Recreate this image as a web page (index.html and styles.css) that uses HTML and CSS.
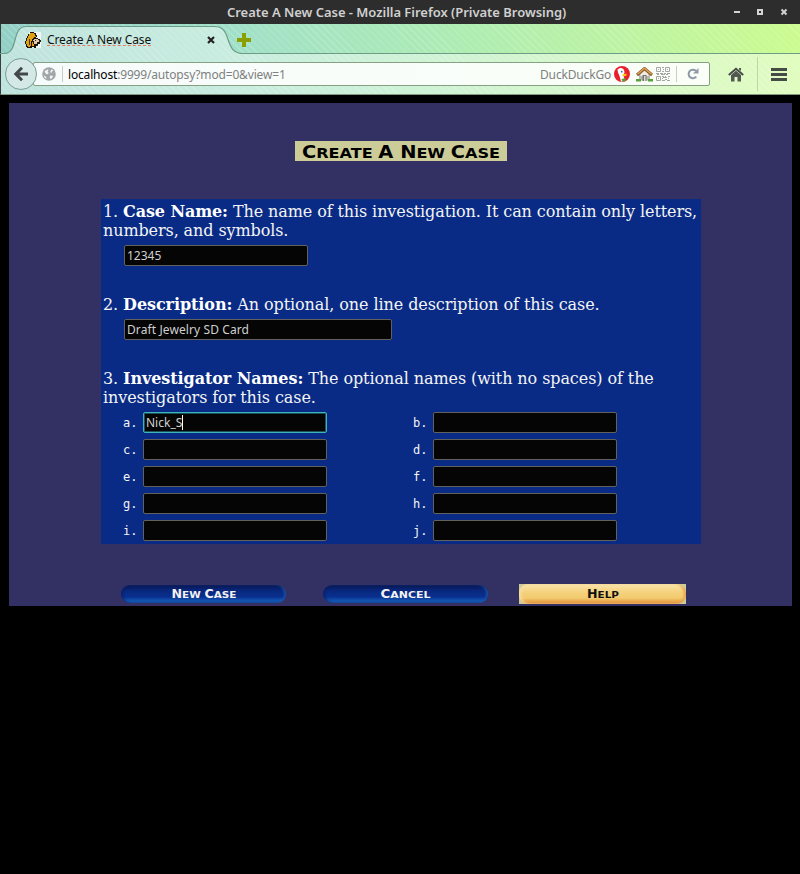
FILE: index.html
```
<!DOCTYPE html>
<html lang="en">
<head>
<meta charset="utf-8">
<title>Create A New Case</title>
<link rel="stylesheet" href="styles.css">
</head>
<body>
<header class="titlebar">
  <span class="window-title">Create A New Case - Mozilla Firefox (Private Browsing)</span>
  <svg class="window-controls" width="60" height="24" viewBox="0 0 60 24">
    <path d="M4 12h6" stroke="#d3d3d3" stroke-width="2"/>
    <rect x="28" y="10" width="4" height="4" fill="none" stroke="#d3d3d3" stroke-width="2"/>
    <path d="M51.5 9.500l5 5m0-5l-5 5" stroke="#d3d3d3" stroke-width="2"/>
  </svg>
</header>
<div class="chrome">
  <div class="tabs">
    <svg class="tab-shape" width="800" height="30" viewBox="0 0 800 30">
      <path d="M0 30V29.500H4C19 29.500 11 2.500 26 2.500H215C233 2.500 223 29.500 243 29.500H800V30Z" fill="#fff" fill-opacity=".42"/>
      <path d="M0 29.500H4C19 29.500 11 2.500 26 2.500H215C233 2.500 223 29.500 243 29.500H800" fill="none" stroke="#6d9c87" stroke-width="1.200"/>
    </svg>
    <svg class="favicon" width="16" height="16" viewBox="0 0 16 16">
      <path d="M4 0h12v16H2V8z" fill="#eef8f8"/>
      <path d="M5 0h4v1h2v2h1v2h-1v3l2 6h-2v2H9v-1H7v1H2v-1H1v-3H0V9h1V6h1V4h1V2h2z" fill="#1a1508"/>
      <path d="M5 1h4v1h1v2h1v1H9v2H7v2H6v5H5v1H3v-1H2v-2H1V9h1V6h1V4h1V2h1zM7 10h1v4H7z" fill="#e0a010"/>
      <path d="M4 7h1v6H4z" fill="#4b370c"/>
      <path d="M8 6h5v1h2v1h1v2h-1v2h-2v1H9v-1H8z" fill="#1a1508"/>
      <path d="M9 7h4v1h2v2h-1v1h-2v1H9V9H8V8h1z" fill="#e4cba9"/>
      <path d="M10 8h1v1h-1zM14 8h2v2h-2zM12 10h2v1h-2z" fill="#222"/>
      <path d="M7 12h2v2H7z" fill="#e0a010"/>
    </svg>
    <span class="tab-title">Create A New Case</span>
    <svg class="tab-close" width="8" height="8" viewBox="0 0 8 8"><path d="M1 1l6 6M7 1L1 7" stroke="#222" stroke-width="2.200"/></svg>
    <svg class="tab-add" width="14" height="14" viewBox="0 0 14 14"><path d="M5 0h4v5h5v4H9v5H5V9H0V5h5z" fill="#8aa000"/></svg>
  </div>
  <nav class="toolbar">
    <span class="back">
      <svg width="16" height="16" viewBox="0 0 16 16"><path d="M15 8H3M9 1.800L2.800 8 9 14.200" fill="none" stroke="#42484a" stroke-width="3"/></svg>
    </span>
    <div class="urlbar">
      <svg class="globe" width="14" height="14" viewBox="0 0 14 14">
        <circle cx="7" cy="7" r="6.800" fill="#a2a6a8"/>
        <path d="M2.500 4.500l2.500-2 1.500.5-1 2 1.500 1-1.500 1.200-1.500-.2zM9.500 2.200l1.800 1.300-1.300.9-.8 1.600-1-1zM8 8.500l2.500.2.500 1L9 12 7.800 11zM1.500 8.500l2.300 1 .9 2.300-1.800-.8z" fill="#f3f5f5"/>
      </svg>
      <i class="rule"></i>
      <span class="url"><b>localhost</b>:9999/autopsy?mod=0&amp;view=1</span>
      <span class="engine">DuckDuckGo</span>
      <svg class="duck" width="16" height="16" viewBox="0 0 16 16">
        <circle cx="8" cy="8" r="8" fill="#ea1f2c"/>
        <path d="M3.500 3.500l2-1.300c3-.6 5 1.300 5 4.300L9.500 9l1 4.500-1.500 2H7L5.500 10 4 6.500z" fill="#fff"/>
        <path d="M8.500 8.500l4-1-.5 1.200h1.500l-2 1.300-3 .3z" fill="#fdca0a"/>
        <path d="M7.500 13l4-1v3l-3 .8z" fill="#50a535"/><circle cx="7.700" cy="5.700" r=".9" fill="#2878b0"/>
      </svg>
      <svg class="cottage" width="17" height="15" viewBox="0 0 17 15">
        <path d="M3 7h11v6.500H3z" fill="#b9b9b0"/><path d="M4.500 7L8.500 3 12.500 7v2h-8z" fill="#efeee6"/>
        <path d="M6.500 8h4v6h-4z" fill="#757573"/><path d="M8 9h1.500v5H8z" fill="#ddd"/>
        <path d="M1 8l7.500-6.500L16 8" fill="none" stroke="#8b5523" stroke-width="3"/><path d="M1.500 7.200L8.500 1.300l7 5.900" fill="none" stroke="#dca45b" stroke-width="1.500"/>
        <path d="M0 12h5v2.500H0zM12 12h5v2.500h-5z" fill="#57a33c"/>
      </svg>
      <svg class="qr" width="14" height="14" viewBox="0 0 14 14" fill="none" stroke="#a3a6a5">
        <path d="M.5.500h4v4h-4zM9.500.500h4v4h-4zM.5 9.500h4v4h-4z"/>
        <path d="M2 2.500h1M11 2.500h1M2 11.500h1M6 .5h2M7 2.500h1M6 4.500h2M0 6.500h3M4 6.500h3M8 6.500h2M11 6.500h3M1 7.500h2M5 7.500h4M10 7.500h2M6 9.500h2M9 9.500h1M12 9.500h2M7 10.500h4M6 11.500h1M9 12.500h2M12 11.500h1M6 13.500h3M11 13.500h3"/>
      </svg>
      <i class="rule"></i>
      <svg class="reload" width="12" height="12" viewBox="0 0 12 12"><path d="M9.300 8.700A4.300 4.300 0 1 1 8.800 2.800" fill="none" stroke="#8d99a8" stroke-width="2"/><path d="M11.500 0v5.500H6z" fill="#8d99a8"/></svg>
    </div>
    <svg class="home" width="16" height="15" viewBox="0 0 16 15"><path d="M.8 8L8 1.800 15.200 8" fill="none" stroke="#454b45" stroke-width="2"/><path d="M3 8l5-4.300L13 8v6.500H9.500V10h-3v4.500H3zM11 1h2v3l-2-1.500z" fill="#525852"/></svg>
    <i class="divider"></i>
    <svg class="menu" width="16" height="13" viewBox="0 0 16 13"><path d="M0 1.500h16M0 6.500h16M0 11.500h16" stroke="#454b45" stroke-width="3"/></svg>
  </nav>
</div>
<main class="page">
  <svg class="heading" width="212" height="20" viewBox="0 0 212 20">
    <rect width="212" height="20" fill="#cccc99"/>
    <text y="17" textLength="198" lengthAdjust="spacingAndGlyphs" x="7"><tspan class="cap">C</tspan>REATE <tspan class="cap">A N</tspan>EW <tspan class="cap">C</tspan>ASE</text>
  </svg>
  <form class="panel">
    <p class="tight">1. <b>Case Name:</b> The name of this investigation. It can contain only letters,<br>numbers, and symbols.</p>
    <div class="field name">12345</div>
    <p>2. <b>Description:</b> An optional, one line description of this case.</p>
    <div class="field description">Draft Jewelry SD Card</div>
    <p>3. <b>Investigator Names:</b> The optional names (with no spaces) of the<br>investigators for this case.</p>
    <div class="investigators">
      <label>a.<span class="field focus">Nick_S<i class="caret"></i></span></label>
      <label>b.<span class="field"></span></label>
      <label>c.<span class="field"></span></label>
      <label>d.<span class="field"></span></label>
      <label>e.<span class="field"></span></label>
      <label>f.<span class="field"></span></label>
      <label>g.<span class="field"></span></label>
      <label>h.<span class="field"></span></label>
      <label>i.<span class="field"></span></label>
      <label>j.<span class="field"></span></label>
    </div>
  </form>
  <div class="actions">
    <div class="pill blue"><svg width="165" height="18" viewBox="0 0 165 18"><text x="50.500" y="13" textLength="65" lengthAdjust="spacingAndGlyphs"><tspan class="cap">N</tspan>EW <tspan class="cap">C</tspan>ASE</text></svg></div>
    <div class="pill blue"><svg width="165" height="18" viewBox="0 0 165 18"><text x="57.500" y="13" textLength="50" lengthAdjust="spacingAndGlyphs"><tspan class="cap">C</tspan>ANCEL</text></svg></div>
    <div class="help"><div class="pill gold"><svg width="167" height="20" viewBox="0 0 167 20"><text x="68" y="14" textLength="32" lengthAdjust="spacingAndGlyphs"><tspan class="cap">H</tspan>ELP</text></svg></div></div>
  </div>
</main>
</body>
</html>
```
FILE: styles.css
```
* { box-sizing: border-box; }
body { margin: 0; height: 874px; background: #000; font-family: "Noto Sans", sans-serif; overflow: hidden; }
svg { display: block; flex: none; }
.titlebar { display: flex; align-items: center; height: 24px; background: #2d2d2d; padding-left: 227px; }
.window-title { width: 340px; font-size: 13px; letter-spacing: -.03px; font-weight: 600; color: #d0d0d0; white-space: nowrap; }
.window-controls { margin-left: 163px; }
.chrome {
  height: 71px;
  border-left: 1px solid #3c3c3c;
  border-bottom: 1px solid #829b80;
  background:
    repeating-linear-gradient(45deg, rgba(255,255,255,.16) 0 1px, transparent 1px 5px),
    linear-gradient(78deg, #91cfc6 0%, #a1e0c8 30%, #acebb5 55%, #bdf3a2 78%, #ccfb90 100%);
}
.tabs { display: flex; align-items: center; height: 30px; position: relative; padding-left: 24px; }
.tab-shape { position: absolute; left: -1px; top: 0; }
.favicon, .tab-title, .tab-close, .tab-add { position: relative; margin-top: 2px; }
.tab-title { width: 158px; margin-left: 6px; font-size: 12px; letter-spacing: -.1px; line-height: 16px; color: #111; white-space: nowrap; text-decoration: underline dashed #e87868 1px; text-underline-offset: 1px; }
.tab-close { margin-left: 2px; }
.tab-add { margin-left: 22px; }
.toolbar { display: flex; align-items: center; height: 40px; padding-left: 4px; background: rgba(255,255,255,.42); }
.back { display: flex; align-items: center; justify-content: center; flex: none; width: 32px; height: 32px; border: 1px solid #7b9d96; border-radius: 50%; background: #d4e9e5; position: relative; z-index: 1; }
.urlbar { display: flex; align-items: center; width: 677px; height: 24px; margin-left: -4px; padding-left: 8px; border: 1px solid #86a181; border-radius: 2px; background: rgba(255,255,255,.86); }
.rule { width: 1px; height: 16px; background: #c6cfc6; flex: none; }
.globe + .rule { margin-left: 6px; }
.url, .engine { font-size: 12px; line-height: 18px; color: #808080; white-space: nowrap; }
.url { width: 472px; margin-left: 5px; letter-spacing: -.17px; position: relative; top: 1px; }
.url b { font-weight: 400; color: #000; }
.engine { width: 74px; letter-spacing: -.15px; position: relative; top: 1px; }
.cottage { margin-left: 6px; }
.qr { margin-left: 3px; }
.qr + .rule { margin-left: 6px; }
.reload { margin-left: 10px; }
.home { margin-left: 18px; }
.divider { width: 1px; height: 34px; margin-left: 13px; background: #bfd6a8; }
.menu { margin-left: 13px; }
.page { display: flex; flex-direction: column; width: 783px; height: 503px; margin: 8px 0 0 9px; padding: 38px 92px 0; background: #333163; }
.heading { margin-left: 194px; }
.heading text, .pill text { font-family: "DejaVu Sans", sans-serif; font-weight: 700; }
.heading text { font-size: 14.500px; fill: #000; }
.heading .cap { font-size: 17.500px; }
.panel { width: 600px; height: 345px; margin-top: 38px; padding: 3px 2px 0; background: #092b85; color: #f4f4f4; font: 16px/19px "DejaVu Serif", serif; }
.panel p { margin: 0; letter-spacing: -.085px; white-space: nowrap; }
.panel p.tight { letter-spacing: -.1px; }
.panel b { color: #fff; }
.field { display: flex; align-items: center; width: 184px; height: 21px; padding-left: 2px; border: 1px solid #62625c; border-radius: 2px; background: #050505; color: #d0d0d0; font: 12px/17px "Noto Sans", sans-serif; white-space: nowrap; }
.name, .description { margin: 5px 0 29px 21px; }
.description { width: 268px; letter-spacing: .1px; }
.focus { border-color: #3fb4bd; box-shadow: inset 0 0 0 1px #1c5358; }
.caret { width: 1px; height: 15px; background: #fff; }
.investigators { display: grid; grid-template-columns: 290px 290px; gap: 6px 0; margin: 6px 0 0 20px; }
.investigators label { display: flex; align-items: center; height: 21px; font: 12px/21px "DejaVu Sans Mono", monospace; }
.investigators .field { margin: -2px 0 0 5.550px; }
.actions { display: flex; margin: 40px 0 0 20px; }
.pill { width: 165px; height: 18px; margin-top: 1px; border-radius: 9px; }
.pill text { font-size: 9.500px; }
.pill .cap { font-size: 11.500px; }
.blue { background: linear-gradient(#09164f 0, #082477 25%, #092b85 45%, #092e8e 65%, #1459b4 90%, #144a9c); box-shadow: inset 2px 0 3px -1px #0b1e62, inset -2px 0 3px -1px #1d62b4; margin-right: 37px; }
.blue text { fill: #f2f2f2; }
.help { width: 167px; height: 20px; margin-left: -6px; background: #cccc99; }
.gold { width: 167px; height: 20px; margin-top: 0; background: linear-gradient(#fae6b0 0, #f7d98f 25%, #f4d07a 45%, #f3cb70 70%, #e59a42 92%, #e6a858); box-shadow: inset 3px 0 3px -1px #f8dfa2, inset -3px 0 3px -1px #e8a34c; }
.gold text { fill: #111; }
```
